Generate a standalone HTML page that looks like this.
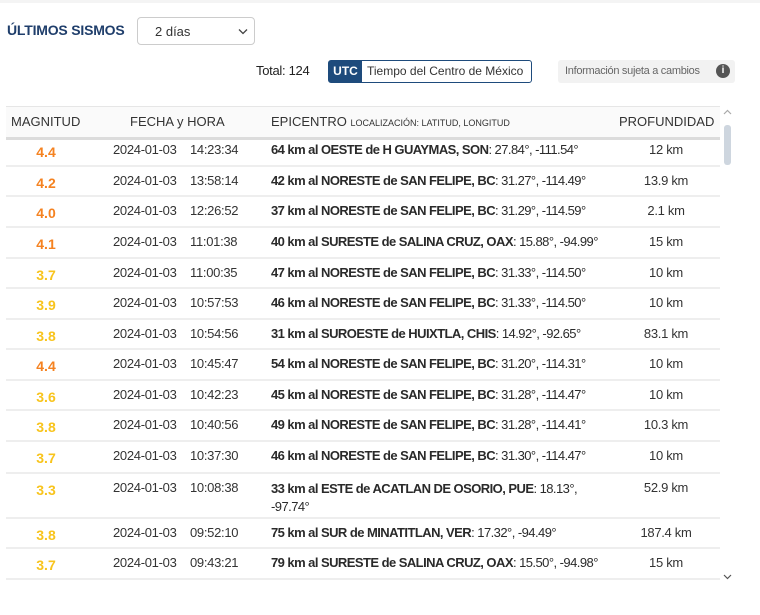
<!DOCTYPE html><html><head><meta charset="utf-8"><style>
body{margin:0;width:760px;height:615px;background:#fff;font-family:"Liberation Sans",sans-serif;color:#333;position:relative;overflow:hidden}
.a{position:absolute;white-space:nowrap}
.t{font-size:13px;letter-spacing:-0.3px}
.row{position:absolute;left:6px;width:714px;border-bottom:2px solid #eeeeee}
.row span{position:absolute;font-size:13px;letter-spacing:-0.3px;white-space:nowrap}
.m{left:0;width:80px;text-align:center;font-size:14px!important;font-weight:bold;letter-spacing:0!important}
.o{color:#f58220}.y{color:#f8c41d}
.d{left:107px}.h{left:184px}.row .e{left:265px;font-weight:bold;letter-spacing:-0.55px;color:#2a2a2a}.e i{font-style:normal;font-weight:normal}
.p{left:600px;width:120px;text-align:center}
</style></head><body>
<div style="position:absolute;left:0;top:0;width:760px;height:3px;background:#f4f4f4"></div>
<div class="a" style="left:7px;top:22px;font-size:14px;font-weight:bold;color:#1f3e6b;letter-spacing:-0.2px">ÚLTIMOS SISMOS</div>
<div class="a" style="left:137px;top:17px;width:118px;height:28px;border:1px solid #ccc;border-radius:4px;box-sizing:border-box;font-size:13px;line-height:27px;padding-left:17px">2 días<svg style="position:absolute;right:6px;top:10px" width="10" height="7" viewBox="0 0 10 7"><path d="M1 1.5 5 5.5 9 1.5" fill="none" stroke="#444" stroke-width="1.3"/></svg></div>
<div class="a t" style="left:256px;top:63px;color:#222">Total: 124</div>
<div class="a" style="left:328px;top:60px;width:204px;height:23px;border:1px solid #1e4b7c;border-radius:3px;box-sizing:border-box;font-size:12px;line-height:21px">
<span style="display:inline-block;background:#1e4b7c;color:#fff;font-weight:bold;width:33px;text-align:center">UTC</span><span style="padding-left:5px">Tiempo del Centro de México</span></div>
<div class="a" style="left:558px;top:60px;width:177px;height:23px;background:#f2f2f2;border-radius:3px;font-size:11px;line-height:23px;color:#666;padding-left:7px;box-sizing:border-box;letter-spacing:-0.3px">Información sujeta a cambios<span style="position:absolute;right:5px;top:4px;width:14px;height:14px;border-radius:50%;background:#555;color:#fff;font-size:10px;line-height:14px;text-align:center;font-weight:bold;letter-spacing:0">i</span></div>
<div style="position:absolute;left:6px;top:106px;width:714px;height:30px;background:#fafafa;border-top:1px solid #e6e6e6;border-bottom:3px solid #dcdcdc"></div>
<div class="a" style="left:11px;top:114px;font-size:13px">MAGNITUD</div>
<div class="a" style="left:130px;top:114px;font-size:13px">FECHA y HORA</div>
<div class="a" style="left:271px;top:114px;font-size:13px">EPICENTRO <span style="font-size:9px">LOCALIZACIÓN: LATITUD, LONGITUD</span></div>
<div class="a" style="left:619px;top:114px;font-size:13px">PROFUNDIDAD</div>
<div style="position:absolute;left:724px;top:125px;width:7px;height:40px;border-radius:3px;background:#ced6df"></div>
<svg style="position:absolute;left:723px;top:109px" width="9" height="6"><path d="M1 5 4.5 1.5 8 5" fill="none" stroke="#aaa" stroke-width="1.2"/></svg>
<svg style="position:absolute;left:723px;top:574px" width="9" height="6"><path d="M1 1 4.5 4.5 8 1" fill="none" stroke="#555" stroke-width="1.2"/></svg>

<div class="row" style="top:139px;height:26px"><span class="m o" style="top:5px">4.4</span><span class="d" style="top:3px">2024-01-03</span><span class="h" style="top:3px">14:23:34</span><span class="e" style="top:3px">64 km al OESTE de H GUAYMAS, SON<i>: 27.84°, -111.54°</i></span><span class="p" style="top:3px">12 km</span></div>
<div class="row" style="top:167px;height:28px"><span class="m o" style="top:8px">4.2</span><span class="d" style="top:6px">2024-01-03</span><span class="h" style="top:6px">13:58:14</span><span class="e" style="top:6px">42 km al NORESTE de SAN FELIPE, BC<i>: 31.27°, -114.49°</i></span><span class="p" style="top:6px">13.9 km</span></div>
<div class="row" style="top:197px;height:29px"><span class="m o" style="top:8px">4.0</span><span class="d" style="top:6px">2024-01-03</span><span class="h" style="top:6px">12:26:52</span><span class="e" style="top:6px">37 km al NORESTE de SAN FELIPE, BC<i>: 31.29°, -114.59°</i></span><span class="p" style="top:6px">2.1 km</span></div>
<div class="row" style="top:228px;height:29px"><span class="m o" style="top:8px">4.1</span><span class="d" style="top:6px">2024-01-03</span><span class="h" style="top:6px">11:01:38</span><span class="e" style="top:6px">40 km al SURESTE de SALINA CRUZ, OAX<i>: 15.88°, -94.99°</i></span><span class="p" style="top:6px">15 km</span></div>
<div class="row" style="top:259px;height:28px"><span class="m y" style="top:8px">3.7</span><span class="d" style="top:6px">2024-01-03</span><span class="h" style="top:6px">11:00:35</span><span class="e" style="top:6px">47 km al NORESTE de SAN FELIPE, BC<i>: 31.33°, -114.50°</i></span><span class="p" style="top:6px">10 km</span></div>
<div class="row" style="top:289px;height:29px"><span class="m y" style="top:8px">3.9</span><span class="d" style="top:6px">2024-01-03</span><span class="h" style="top:6px">10:57:53</span><span class="e" style="top:6px">46 km al NORESTE de SAN FELIPE, BC<i>: 31.33°, -114.50°</i></span><span class="p" style="top:6px">10 km</span></div>
<div class="row" style="top:320px;height:28px"><span class="m y" style="top:8px">3.8</span><span class="d" style="top:6px">2024-01-03</span><span class="h" style="top:6px">10:54:56</span><span class="e" style="top:6px">31 km al SUROESTE de HUIXTLA, CHIS<i>: 14.92°, -92.65°</i></span><span class="p" style="top:6px">83.1 km</span></div>
<div class="row" style="top:350px;height:29px"><span class="m o" style="top:8px">4.4</span><span class="d" style="top:6px">2024-01-03</span><span class="h" style="top:6px">10:45:47</span><span class="e" style="top:6px">54 km al NORESTE de SAN FELIPE, BC<i>: 31.20°, -114.31°</i></span><span class="p" style="top:6px">10 km</span></div>
<div class="row" style="top:381px;height:28px"><span class="m y" style="top:8px">3.6</span><span class="d" style="top:6px">2024-01-03</span><span class="h" style="top:6px">10:42:23</span><span class="e" style="top:6px">45 km al NORESTE de SAN FELIPE, BC<i>: 31.28°, -114.47°</i></span><span class="p" style="top:6px">10 km</span></div>
<div class="row" style="top:411px;height:29px"><span class="m y" style="top:8px">3.8</span><span class="d" style="top:6px">2024-01-03</span><span class="h" style="top:6px">10:40:56</span><span class="e" style="top:6px">49 km al NORESTE de SAN FELIPE, BC<i>: 31.28°, -114.41°</i></span><span class="p" style="top:6px">10.3 km</span></div>
<div class="row" style="top:442px;height:30px"><span class="m y" style="top:8px">3.7</span><span class="d" style="top:6px">2024-01-03</span><span class="h" style="top:6px">10:37:30</span><span class="e" style="top:6px">46 km al NORESTE de SAN FELIPE, BC<i>: 31.30°, -114.47°</i></span><span class="p" style="top:6px">10 km</span></div>
<div class="row" style="top:474px;height:43px"><span class="m y" style="top:8px">3.3</span><span class="d" style="top:6px">2024-01-03</span><span class="h" style="top:6px">10:08:38</span><span class="e" style="top:6px;line-height:18px">33 km al ESTE de ACATLAN DE OSORIO, PUE<i>: 18.13°,<br>-97.74°</i></span><span class="p" style="top:6px">52.9 km</span></div>
<div class="row" style="top:519px;height:28px"><span class="m y" style="top:8px">3.8</span><span class="d" style="top:6px">2024-01-03</span><span class="h" style="top:6px">09:52:10</span><span class="e" style="top:6px">75 km al SUR de MINATITLAN, VER<i>: 17.32°, -94.49°</i></span><span class="p" style="top:6px">187.4 km</span></div>
<div class="row" style="top:549px;height:29px"><span class="m y" style="top:8px">3.7</span><span class="d" style="top:6px">2024-01-03</span><span class="h" style="top:6px">09:43:21</span><span class="e" style="top:6px">79 km al SURESTE de SALINA CRUZ, OAX<i>: 15.50°, -94.98°</i></span><span class="p" style="top:6px">15 km</span></div>
</body></html>
